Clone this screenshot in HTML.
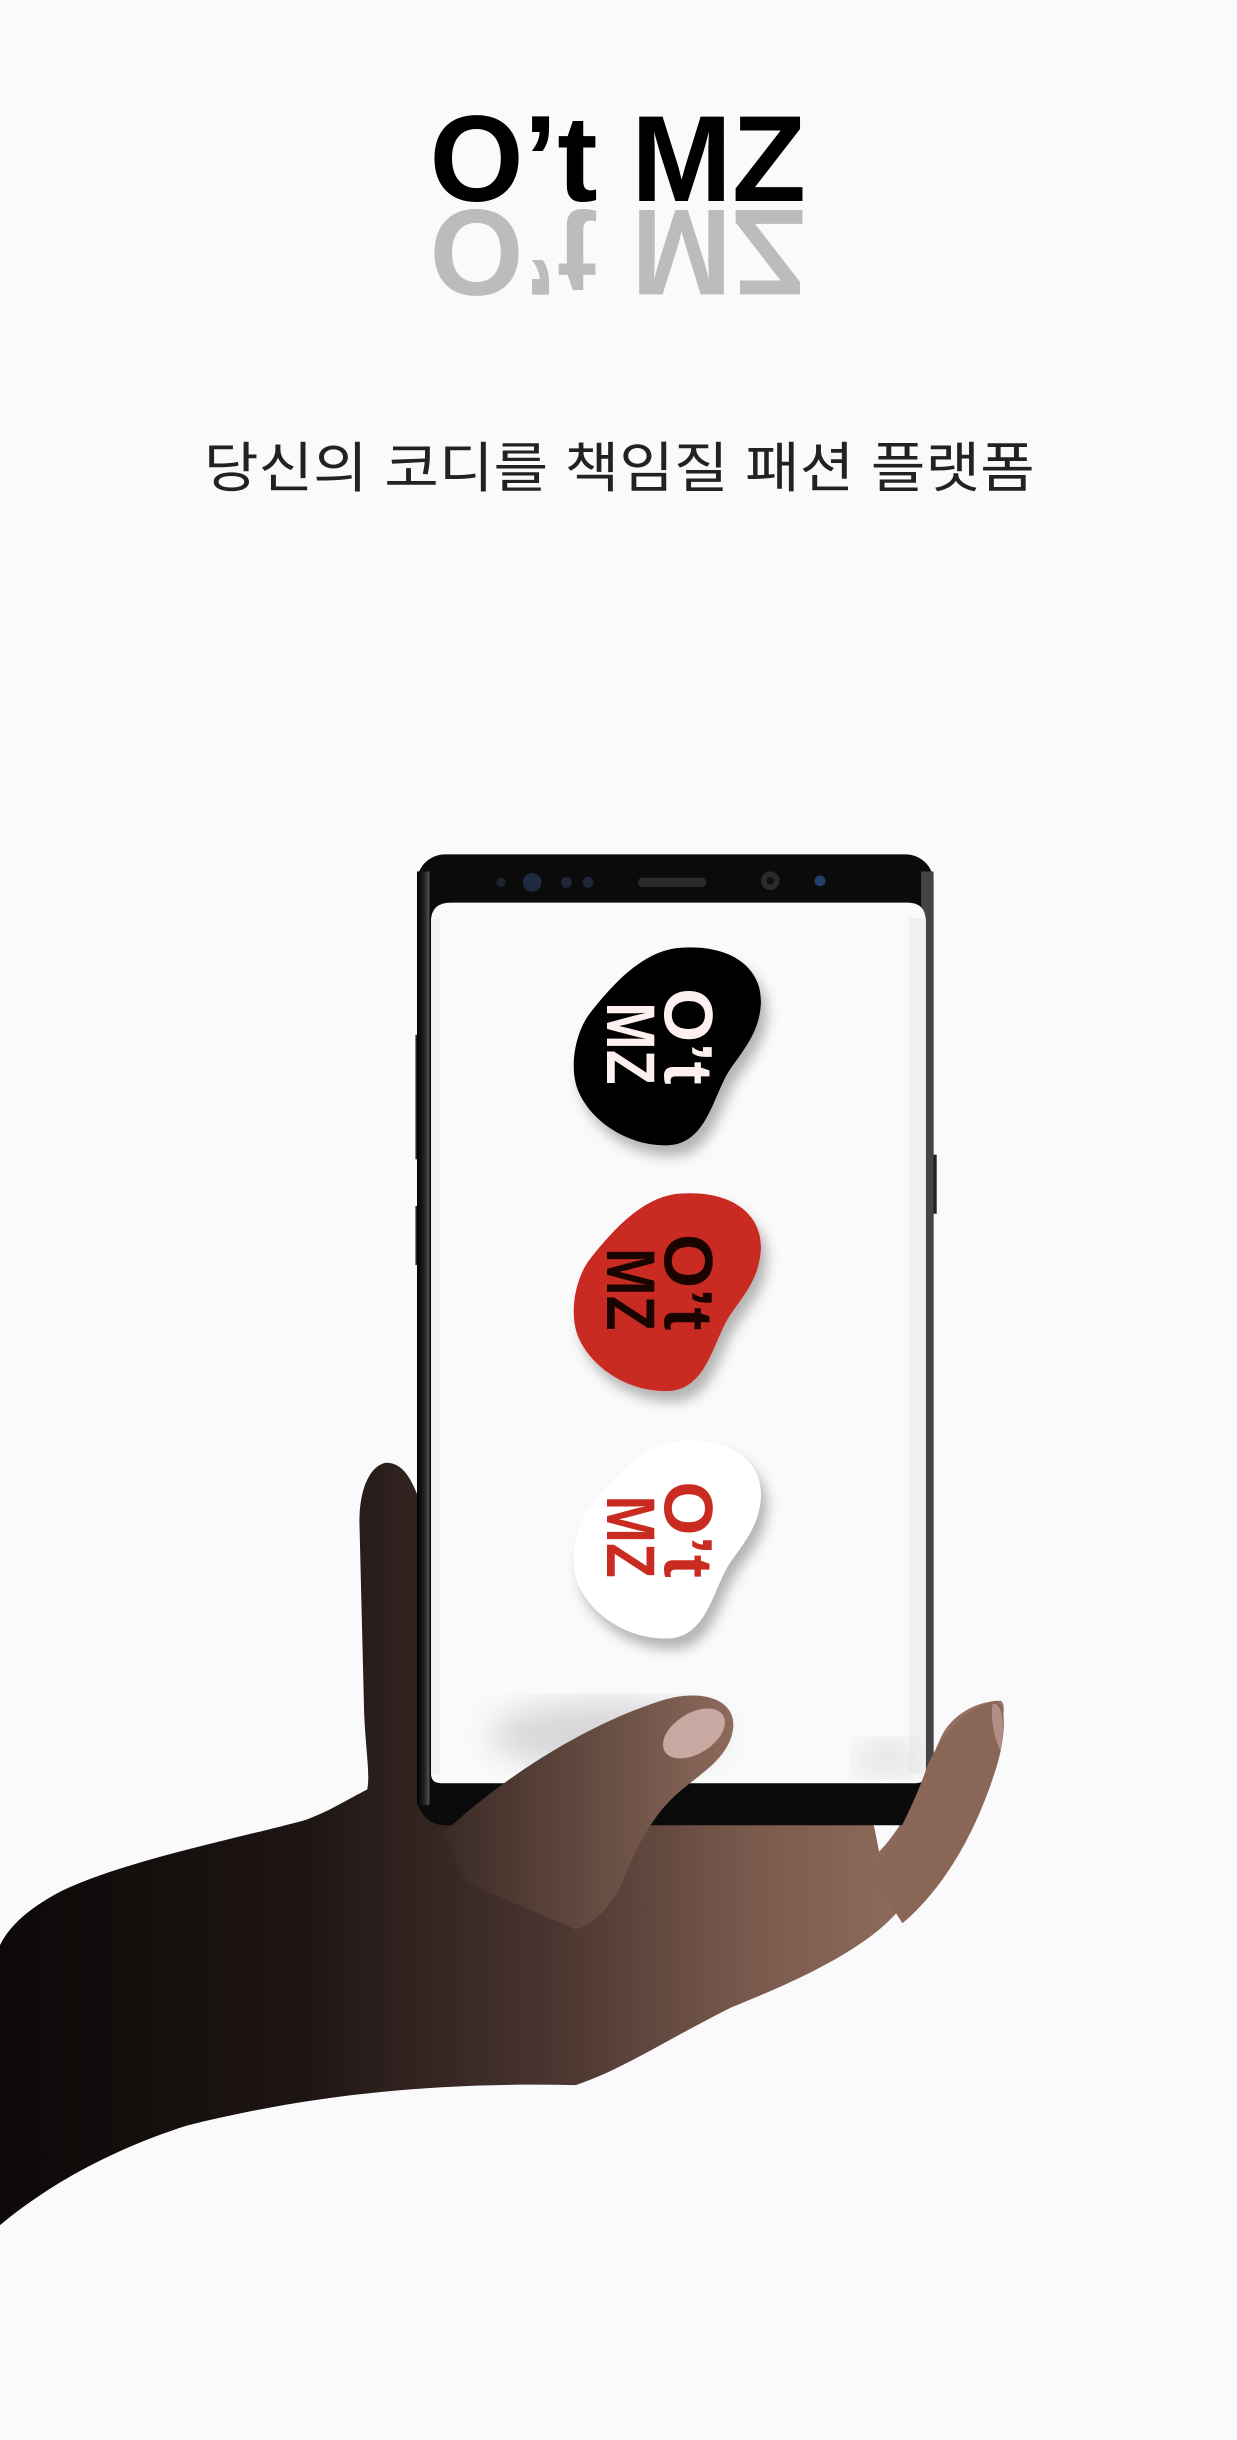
<!DOCTYPE html>
<html><head><meta charset="utf-8">
<style>
html,body{margin:0;padding:0;background:#fafafc;}
svg{display:block;}
</style></head>
<body>
<svg width="1237" height="2440" viewBox="0 0 795 1568" xmlns="http://www.w3.org/2000/svg">
<defs>
<linearGradient id="skin" x1="0" y1="0" x2="1" y2="0" gradientUnits="objectBoundingBox">
<stop offset="0" stop-color="#0c0908"/>
<stop offset="0.3" stop-color="#1d1513"/>
<stop offset="0.55" stop-color="#4a3530"/>
<stop offset="0.75" stop-color="#7a5a4d"/>
<stop offset="1" stop-color="#9a7566"/>
</linearGradient>
<linearGradient id="skin2" x1="0" y1="0" x2="1" y2="0">
<stop offset="0" stop-color="#3a2a25"/>
<stop offset="1" stop-color="#8d6a5b"/>
</linearGradient>
<linearGradient id="bezelL" x1="0" y1="0" x2="1" y2="0">
<stop offset="0" stop-color="#000"/>
<stop offset="0.6" stop-color="#222"/>
<stop offset="1" stop-color="#555"/>
</linearGradient>
<filter id="sh" x="-30%" y="-30%" width="160%" height="170%">
<feDropShadow dx="4" dy="7" stdDeviation="4" flood-color="#000" flood-opacity="0.28"/>
</filter>
<filter id="blur"><feGaussianBlur stdDeviation="10"/></filter>
<path id="pick" d="M 438,609 C 470,607 490,622 489,645 C 488,662 480,672 470,686 C 458,703 455,736 428,736 C 402,736 380,720 372,702 C 365,686 370,662 380,650 C 396,630 415,610 438,609 Z"/>
</defs>

<rect width="795" height="1568" fill="#fafafc"/>

<text x="276" y="129" font-family="Liberation Sans, sans-serif" font-weight="700" font-size="79" textLength="242" lengthAdjust="spacingAndGlyphs" fill="#000">O’t MZ</text>
<text x="276" y="129" transform="translate(0,264) scale(1,-1)" font-family="Liberation Sans, sans-serif" font-weight="700" font-size="79" textLength="242" lengthAdjust="spacingAndGlyphs" fill="#bcbcbc">O’t MZ</text>

<text x="131" y="313" font-family="Liberation Sans, 'Noto Sans CJK KR', sans-serif" font-size="35" textLength="534" lengthAdjust="spacingAndGlyphs" fill="#222">당신의 코디를 책임질 패션 플랫폼</text>

<path fill="url(#skin)" d="M 248,940 C 238,942 231,956 231,978 L 234,1100 C 235,1125 238,1140 236,1150 C 224,1156 210,1165 195,1170 C 150,1182 80,1196 40,1215 C 15,1228 5,1240 0,1250 L 0,1430 C 30,1405 70,1382 120,1366 C 200,1346 280,1338 370,1340 C 400,1330 430,1310 470,1290 C 520,1270 560,1250 580,1225 C 610,1190 630,1150 640,1120 C 645,1105 647,1095 643,1093 C 630,1093 612,1100 604,1118 C 594,1140 586,1168 565,1190 L 560,1165 L 300,1165 L 270,1150 L 268,960 C 262,945 256,940 248,940 Z"/>

<rect x="267" y="665" width="4" height="80" fill="#222"/>
<rect x="267" y="775" width="4" height="38" fill="#222"/>
<rect x="598" y="742" width="4" height="38" fill="#222"/>
<rect x="268" y="549" width="332" height="624" rx="18" fill="#0b0b0b"/>
<rect x="268" y="560" width="8" height="600" fill="url(#bezelL)"/>
<rect x="592" y="560" width="8" height="600" fill="#444"/>
<path d="M 277,592 Q 277,580 290,580 L 583,580 Q 595,580 595,592 L 595,1140 Q 595,1146 588,1146 L 284,1146 Q 277,1146 277,1140 Z" fill="#fafafb"/>
<rect x="584" y="590" width="11" height="550" fill="#f0f0f2"/>
<rect x="277" y="590" width="6" height="550" fill="#f2f2f4"/>
<circle cx="322" cy="567" r="3" fill="#1b2130"/>
<circle cx="342" cy="567" r="6" fill="#1e2a40"/>
<circle cx="364" cy="567" r="3.5" fill="#1e2638"/>
<circle cx="378" cy="567" r="3.5" fill="#1e2638"/>
<rect x="410" y="564" width="44" height="6" rx="3" fill="#2a2a2c"/>
<circle cx="495" cy="566" r="6" fill="#2b2b2d"/>
<circle cx="495" cy="566" r="2.5" fill="#111"/>
<circle cx="527" cy="566" r="3.5" fill="#23406a"/>
<ellipse cx="390" cy="1115" rx="75" ry="22" fill="#cfcfd1" filter="url(#blur)" opacity="0.8"/>
<ellipse cx="570" cy="1130" rx="20" ry="12" fill="#d8d8da" filter="url(#blur)" opacity="0.7"/>

<g filter="url(#sh)"><use href="#pick" fill="#000"/></g>
<g font-family="Liberation Sans, sans-serif" font-weight="700" font-size="44">
<text transform="translate(427,635) rotate(90)" textLength="62" lengthAdjust="spacingAndGlyphs" fill="#fff0f0">O’t</text>
<text transform="translate(390,644) rotate(90)" textLength="53" lengthAdjust="spacingAndGlyphs" fill="#fff0f0">MZ</text>
</g>
<g transform="translate(0,158)">
<g filter="url(#sh)"><use href="#pick" fill="#c92b20"/></g>
<g font-family="Liberation Sans, sans-serif" font-weight="700" font-size="44">
<text transform="translate(427,635) rotate(90)" textLength="62" lengthAdjust="spacingAndGlyphs" fill="#1a0400">O’t</text>
<text transform="translate(390,644) rotate(90)" textLength="53" lengthAdjust="spacingAndGlyphs" fill="#1a0400">MZ</text>
</g></g>
<g transform="translate(0,317)">
<g filter="url(#sh)"><use href="#pick" fill="#ffffff"/></g>
<g font-family="Liberation Sans, sans-serif" font-weight="700" font-size="44">
<text transform="translate(427,635) rotate(90)" textLength="62" lengthAdjust="spacingAndGlyphs" fill="#c92b20">O’t</text>
<text transform="translate(390,644) rotate(90)" textLength="53" lengthAdjust="spacingAndGlyphs" fill="#c92b20">MZ</text>
</g></g>

<path fill="url(#skin2)" d="M 285,1178 C 320,1145 375,1108 428,1092 C 455,1085 474,1094 471,1112 C 468,1130 450,1140 436,1152 C 420,1166 410,1185 402,1205 C 395,1222 385,1235 370,1240 L 300,1210 Z"/>
<ellipse cx="446" cy="1114" rx="22" ry="13" transform="rotate(-32 446 1114)" fill="#c9a8a2"/>
<path fill="#8a6657" d="M 596,1135 C 606,1112 624,1096 640,1093 C 648,1095 646,1120 639,1140 C 626,1180 606,1214 580,1236 L 560,1205 C 575,1185 588,1158 596,1135 Z"/>
<path fill="#b08e86" d="M 638,1095 C 645,1094 646,1110 643,1125 C 640,1120 636,1105 638,1095 Z"/>
</svg>
</body></html>
